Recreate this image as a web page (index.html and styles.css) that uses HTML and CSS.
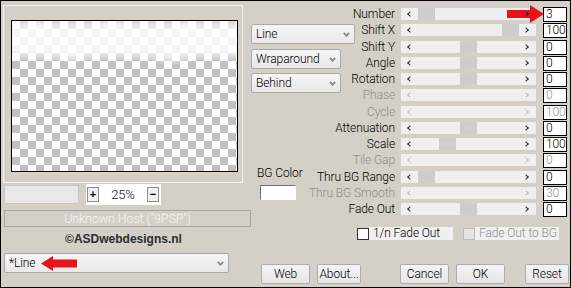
FILE: index.html
```html
<!DOCTYPE html>
<html>

<head>
    <meta charset="utf-8">
    <link rel="stylesheet" href="styles.css">
</head>

<body>
    <div class="dialog">
        <!-- preview side -->
        <div class="left-col">
            <div class="preview-frame">
                <div class="preview"></div>
            </div>
            <div class="zoom-row">
                <div class="zoom-field"></div>
                <div class="zoom-box">
                    <span class="zoom-btn">+</span>
                    <span class="zoom-value">25%</span>
                    <span class="zoom-btn">&minus;</span>
                </div>
            </div>
            <div class="host-box">Unknown Host ("9PSP")</div>
            <div class="copyright">&copy;ASDwebdesigns.nl</div>
            <div class="combo combo-preset">
                <span>*Line</span>
                <svg class="chev" width="7" height="5" viewBox="0 0 7 5"><polyline points="0.8,0.8 3.5,3.8 6.2,0.8" fill="none" stroke="#8a8a8a" stroke-width="1.8"/></svg>
                <svg class="red-arrow arrow-left" width="40" height="20" viewBox="0 0 40 20">
                    <polygon points="1,9.5 13,2 13,17" fill="#e8141b"/>
                    <rect x="12" y="5.5" width="25" height="8" fill="#e8141b"/>
                </svg>
            </div>
        </div>

        <!-- settings side -->
        <div class="right-col">
            <div class="params">
                <div class="mid-col">
                    <div class="combo combo-line">
                        <span>Line</span>
                        <svg class="chev" width="7" height="5" viewBox="0 0 7 5"><polyline points="0.8,0.8 3.5,3.8 6.2,0.8" fill="none" stroke="#8a8a8a" stroke-width="1.8"/></svg>
                    </div>
                    <div class="combo combo-short combo-wrap">
                        <span>Wraparound</span>
                        <svg class="chev" width="7" height="5" viewBox="0 0 7 5"><polyline points="0.8,0.8 3.5,3.8 6.2,0.8" fill="none" stroke="#8a8a8a" stroke-width="1.8"/></svg>
                    </div>
                    <div class="combo combo-short combo-behind">
                        <span>Behind</span>
                        <svg class="chev" width="7" height="5" viewBox="0 0 7 5"><polyline points="0.8,0.8 3.5,3.8 6.2,0.8" fill="none" stroke="#8a8a8a" stroke-width="1.8"/></svg>
                    </div>
                    <div class="bgcolor">
                        <span>BG Color</span>
                        <div class="swatch"></div>
                    </div>
                </div>

                <div class="label">Number</div>
                <div class="bar">
                    <div class="thumb" style="margin-left:17px"></div>
                    <svg class="red-arrow arrow-right" width="40" height="20" viewBox="0 0 40 20">
                        <rect x="1" y="6" width="24" height="8" fill="#e8141b"/>
                        <polygon points="24,1 38,10 24,19" fill="#e8141b"/>
                    </svg>
                </div>
                <div class="num">3</div>

                <div class="label">Shift X</div>
                <div class="bar"><div class="thumb" style="margin-left:101px"></div></div>
                <div class="num">100</div>

                <div class="label">Shift Y</div>
                <div class="bar"><div class="thumb" style="margin-left:59px"></div></div>
                <div class="num">0</div>

                <div class="label">Angle</div>
                <div class="bar"><div class="thumb" style="margin-left:59px"></div></div>
                <div class="num">0</div>

                <div class="label">Rotation</div>
                <div class="bar"><div class="thumb" style="margin-left:59px"></div></div>
                <div class="num">0</div>

                <div class="label off">Phase</div>
                <div class="bar off"></div>
                <div class="num off">0</div>

                <div class="label off">Cycle</div>
                <div class="bar off"></div>
                <div class="num off">100</div>

                <div class="label">Attenuation</div>
                <div class="bar"><div class="thumb" style="margin-left:59px"></div></div>
                <div class="num">0</div>

                <div class="label">Scale</div>
                <div class="bar"><div class="thumb" style="margin-left:38px"></div></div>
                <div class="num">100</div>

                <div class="label off">Tile Gap</div>
                <div class="bar off"></div>
                <div class="num off">0</div>

                <div class="label">Thru BG Range</div>
                <div class="bar"><div class="thumb" style="margin-left:17px"></div></div>
                <div class="num">0</div>

                <div class="label off">Thru BG Smooth</div>
                <div class="bar off"></div>
                <div class="num off">30</div>

                <div class="label">Fade Out</div>
                <div class="bar"><div class="thumb" style="margin-left:59px"></div></div>
                <div class="num">0</div>
            </div>

            <div class="check-row">
                <div class="check">
                    <div class="box"></div>
                    <div class="check-label">1/n Fade Out</div>
                </div>
                <div class="check off">
                    <div class="box"></div>
                    <div class="check-label">Fade Out to BG</div>
                </div>
            </div>

            <div class="button-row">
                <div class="btn btn-web">Web</div>
                <div class="btn btn-about">About...</div>
                <div class="btn btn-cancel">Cancel</div>
                <div class="btn btn-ok">OK</div>
                <div class="btn btn-reset">Reset</div>
            </div>
        </div>
    </div>
</body>

</html>
```

FILE: styles.css
```css
html,
body {
    margin: 0;
    height: 100%;
}

body {
    background: #d4d0c8;
    font-family: Roboto, "Liberation Sans", Arial, sans-serif;
    font-size: 12px;
    font-weight: 300;
    letter-spacing: -0.1px;
    color: #000;
}

.dialog {
    display: flex;
    width: 571px;
    height: 288px;
    box-sizing: border-box;
    border: 1px solid #000;
    background: #d4d0c8;
}

/* ---------- left side ---------- */
.left-col {
    display: flex;
    flex-direction: column;
    width: 250px;
    padding: 4px 0 0 2px;
    box-sizing: border-box;
}

.preview-frame {
    width: 240px;
    height: 178px;
    box-sizing: border-box;
    padding: 14px 0 0 7px;
    border: 1px solid #f4f3ef;
}

/* checkerboard with the white "clouds" along the top */
.preview {
    width: 227px;
    height: 152px;
    box-sizing: border-box;
    border: 1px solid #000;
    background:
        radial-gradient(ellipse 16px 8px at 24px 6px, rgba(255, 255, 255, 0.8), rgba(255, 255, 255, 0)),
        radial-gradient(ellipse 20px 8px at 100px 5px, rgba(255, 255, 255, 0.7), rgba(255, 255, 255, 0)),
        radial-gradient(ellipse 18px 8px at 175px 6px, rgba(255, 255, 255, 0.7), rgba(255, 255, 255, 0)),
        radial-gradient(ellipse 22px 9px at 60px 34px, rgba(255, 255, 255, 0.6), rgba(255, 255, 255, 0)),
        radial-gradient(ellipse 24px 9px at 160px 36px, rgba(255, 255, 255, 0.6), rgba(255, 255, 255, 0)),
        linear-gradient(to bottom, rgba(255, 255, 255, 0.35) 0, rgba(255, 255, 255, 0.85) 10px, rgba(255, 255, 255, 0.82) 30px, rgba(255, 255, 255, 0) 41px),
        conic-gradient(#c1c1c1 0 25%, #fff 0 50%, #c1c1c1 0 75%, #fff 0);
    background-size: auto, auto, auto, auto, auto, auto, 16px 16px;
}

.zoom-row {
    display: flex;
    align-items: center;
    height: 21px;
    margin: 1px 0 0 1px;
}

.zoom-field {
    width: 75px;
    height: 19px;
    box-sizing: border-box;
    background: #e8e8e8;
    border: 1px solid #c6c6c6;
}

.zoom-box {
    display: flex;
    align-items: center;
    justify-content: space-between;
    width: 75px;
    height: 21px;
    margin-left: 7px;
    padding: 0 2px 0 1px;
    box-sizing: border-box;
    background: #fff;
}

.zoom-btn {
    display: flex;
    align-items: center;
    justify-content: center;
    width: 12px;
    height: 15px;
    box-sizing: border-box;
    border: 1px solid #8f8f8f;
    background: #f0f0f0;
    font-family: "Liberation Sans", Arial, sans-serif;
    font-weight: bold;
    font-size: 11px;
    line-height: 1;
    letter-spacing: 0;
}

.zoom-value {
    color: #0c0c3a;
    font-size: 13px;
}

.host-box {
    width: 247px;
    height: 17px;
    margin: 5px 0 0 1px;
    box-sizing: border-box;
    border: 1px solid #a4a4a4;
    color: #f6f6f6;
    font-size: 12.5px;
    line-height: 15px;
    text-align: center;
}

.copyright {
    width: 239px;
    margin: 5px 0 0 1px;
    color: #2e2e2e;
    font-family: "Liberation Sans", Arial, sans-serif;
    font-weight: bold;
    letter-spacing: 0;
    line-height: 14px;
    text-align: center;
}

/* combo boxes */
.combo {
    position: relative;
    display: flex;
    align-items: center;
    justify-content: space-between;
    height: 20px;
    box-sizing: border-box;
    padding: 0 4px 0 4px;
    border: 1px solid #a9a9a9;
    border-radius: 2px;
    background: linear-gradient(#f5f5f5, #e9e9e9);
}

.combo-preset {
    width: 225px;
    margin: 7px 0 0 1px;
}

.red-arrow {
    position: absolute;
}

.arrow-left {
    left: 35px;
    top: 0;
}

/* ---------- right side ---------- */
.right-col {
    display: flex;
    flex-direction: column;
    width: 318px;
    padding-top: 5px;
}

.params {
    display: grid;
    grid-template-columns: 104px 34px 135px 25px;
    grid-template-rows: repeat(13, 16.25px);
    column-gap: 6px;
}

.mid-col {
    grid-column: 1;
    grid-row: 1 / 14;
    display: flex;
    flex-direction: column;
    padding-top: 18px;
}

.combo-line {
    width: 104px;
}

.combo-short {
    width: 90px;
}

.combo-wrap {
    margin-top: 5px;
}

.combo-behind {
    margin-top: 4px;
}

.bgcolor {
    display: flex;
    flex-direction: column;
    align-items: flex-start;
    margin: 74px 0 0 6px;
    line-height: 13px;
}

.swatch {
    width: 36px;
    height: 15px;
    margin: 5px 0 0 3px;
    box-sizing: border-box;
    border: 1px solid;
    border-color: #6e6e6e #ffffff #ffffff #6e6e6e;
    background: #fff;
}

.label {
    grid-column: 2;
    display: flex;
    align-items: center;
    justify-content: flex-end;
    white-space: nowrap;
}

.label.off {
    color: #8f8f8f;
}

/* slider track: arrows and thumb share one cell */
.bar {
    grid-column: 3;
    align-self: center;
    position: relative;
    display: grid;
    height: 12px;
    background: #efefef;
}

.bar::before,
.bar::after {
    content: "";
    grid-area: 1 / 1;
    align-self: center;
    width: 3px;
    height: 3px;
    border: 0 solid #2a2a2a;
    transform: rotate(45deg);
}

.bar::before {
    justify-self: start;
    margin-left: 7px;
    border-left-width: 1.6px;
    border-bottom-width: 1.6px;
}

.bar::after {
    justify-self: end;
    margin-right: 8px;
    border-right-width: 1.6px;
    border-top-width: 1.6px;
}

.bar.off::before,
.bar.off::after {
    border-color: #bdbdbd;
}

.thumb {
    grid-area: 1 / 1;
    justify-self: start;
    width: 17px;
    height: 12px;
    background: #cdcdcd;
}

.arrow-right {
    left: 105px;
    top: -4px;
}

.num {
    grid-column: 4;
    align-self: start;
    height: 15px;
    margin: 1px 0 0 1px;
    padding-left: 2px;
    box-sizing: border-box;
    border: 1px solid #000;
    background: #fff;
    line-height: 13px;
}

.num.off {
    color: #8f8f8f;
}

/* checkboxes */
.check-row {
    display: flex;
    align-items: center;
    height: 13px;
    margin-top: 10px;
    padding-left: 106px;
}

.check {
    display: flex;
    align-items: center;
}

.check + .check {
    margin-left: 10px;
}

.box {
    width: 12px;
    height: 12px;
    box-sizing: border-box;
    border: 1px solid #333;
    background: #fff;
}

.check-label {
    width: 80px;
    height: 13px;
    padding-left: 4px;
    background: #f0f0f0;
    line-height: 13px;
}

.check.off .box {
    border-color: #bcbcbc;
    background: #e4e4e4;
}

.check.off .check-label {
    color: #8f8f8f;
}

/* buttons */
.button-row {
    display: flex;
    margin-top: 24px;
    padding-left: 10px;
}

.btn {
    display: flex;
    align-items: center;
    justify-content: center;
    height: 20px;
    box-sizing: border-box;
    border: 1px solid #adadad;
    border-radius: 2px;
    background: linear-gradient(#f4f4f4, #e5e5e5);
}

.btn-web {
    width: 49px;
}

.btn-about {
    width: 44px;
    margin-left: 7px;
}

.btn-cancel {
    width: 49px;
    margin-left: 39px;
}

.btn-ok {
    width: 49px;
    margin-left: 7px;
}

.btn-reset {
    width: 44px;
    margin-left: 20px;
}
```
